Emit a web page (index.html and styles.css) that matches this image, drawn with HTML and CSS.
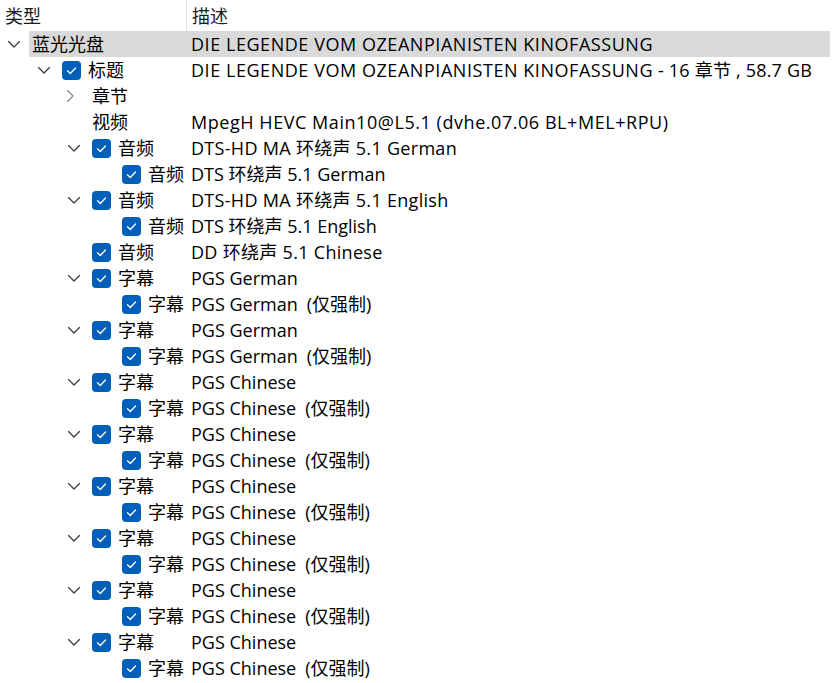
FILE: index.html
```html
<!DOCTYPE html>
<html lang="zh-CN">
<head>
  <meta charset="UTF-8" />
  <title>蓝光光盘</title>
  <link rel="stylesheet" href="styles.css">
</head>
<body>
  <div class="tree">
    <div class="head">
      <div class="head-type">类型</div>
      <div class="head-desc">描述</div>
    </div>

    <div class="row selected">
      <span class="exp"><svg class="down" viewBox="0 0 12 7"><polyline points="0.5,0.5 6,6 11.5,0.5"/></svg></span>
      <div class="sel">
        <span class="sel-name">蓝光光盘</span>
        <span class="desc caps">DIE LEGENDE VOM OZEANPIANISTEN KINOFASSUNG</span>
      </div>
    </div>

    <div class="row">
      <div class="type l1"><span class="exp"><svg class="down" viewBox="0 0 12 7"><polyline points="0.5,0.5 6,6 11.5,0.5"/></svg></span><span class="chk"></span>标题</div>
      <div class="desc caps">DIE LEGENDE VOM OZEANPIANISTEN KINOFASSUNG<span class="plain"> - 16 章节 , 58.7 GB</span></div>
    </div>
    <div class="row">
      <div class="type l2"><span class="exp"><svg class="right" viewBox="0 0 7 12"><polyline points="0.5,0.5 6,6 0.5,11.5"/></svg></span>章节</div>
      <div class="desc"></div>
    </div>
    <div class="row">
      <div class="type l2"><span class="exp"></span>视频</div>
      <div class="desc caps">MpegH HEVC Main10@L5.1 (dvhe.07.06 BL+MEL+RPU)</div>
    </div>

    <div class="row">
      <div class="type l2"><span class="exp"><svg class="down" viewBox="0 0 12 7"><polyline points="0.5,0.5 6,6 11.5,0.5"/></svg></span><span class="chk"></span>音频</div>
      <div class="desc mixed">DTS-HD MA 环绕声 5.1 German</div>
    </div>
    <div class="row">
      <div class="type l3"><span class="exp"></span><span class="chk"></span>音频</div>
      <div class="desc">DTS 环绕声 5.1 German</div>
    </div>
    <div class="row">
      <div class="type l2"><span class="exp"><svg class="down" viewBox="0 0 12 7"><polyline points="0.5,0.5 6,6 11.5,0.5"/></svg></span><span class="chk"></span>音频</div>
      <div class="desc mixed">DTS-HD MA 环绕声 5.1 English</div>
    </div>
    <div class="row">
      <div class="type l3"><span class="exp"></span><span class="chk"></span>音频</div>
      <div class="desc">DTS 环绕声 5.1 English</div>
    </div>
    <div class="row">
      <div class="type l2"><span class="exp"></span><span class="chk"></span>音频</div>
      <div class="desc mixed">DD 环绕声 5.1 Chinese</div>
    </div>

    <div class="row">
      <div class="type l2"><span class="exp"><svg class="down" viewBox="0 0 12 7"><polyline points="0.5,0.5 6,6 11.5,0.5"/></svg></span><span class="chk"></span>字幕</div>
      <div class="desc">PGS German</div>
    </div>
    <div class="row">
      <div class="type l3"><span class="exp"></span><span class="chk"></span>字幕</div>
      <div class="desc">PGS German<span class="forced">(仅强制)</span></div>
    </div>
    <div class="row">
      <div class="type l2"><span class="exp"><svg class="down" viewBox="0 0 12 7"><polyline points="0.5,0.5 6,6 11.5,0.5"/></svg></span><span class="chk"></span>字幕</div>
      <div class="desc">PGS German</div>
    </div>
    <div class="row">
      <div class="type l3"><span class="exp"></span><span class="chk"></span>字幕</div>
      <div class="desc">PGS German<span class="forced">(仅强制)</span></div>
    </div>

    <div class="row">
      <div class="type l2"><span class="exp"><svg class="down" viewBox="0 0 12 7"><polyline points="0.5,0.5 6,6 11.5,0.5"/></svg></span><span class="chk"></span>字幕</div>
      <div class="desc">PGS Chinese</div>
    </div>
    <div class="row">
      <div class="type l3"><span class="exp"></span><span class="chk"></span>字幕</div>
      <div class="desc">PGS Chinese<span class="forced">(仅强制)</span></div>
    </div>
    <div class="row">
      <div class="type l2"><span class="exp"><svg class="down" viewBox="0 0 12 7"><polyline points="0.5,0.5 6,6 11.5,0.5"/></svg></span><span class="chk"></span>字幕</div>
      <div class="desc">PGS Chinese</div>
    </div>
    <div class="row">
      <div class="type l3"><span class="exp"></span><span class="chk"></span>字幕</div>
      <div class="desc">PGS Chinese<span class="forced">(仅强制)</span></div>
    </div>
    <div class="row">
      <div class="type l2"><span class="exp"><svg class="down" viewBox="0 0 12 7"><polyline points="0.5,0.5 6,6 11.5,0.5"/></svg></span><span class="chk"></span>字幕</div>
      <div class="desc">PGS Chinese</div>
    </div>
    <div class="row">
      <div class="type l3"><span class="exp"></span><span class="chk"></span>字幕</div>
      <div class="desc">PGS Chinese<span class="forced">(仅强制)</span></div>
    </div>
    <div class="row">
      <div class="type l2"><span class="exp"><svg class="down" viewBox="0 0 12 7"><polyline points="0.5,0.5 6,6 11.5,0.5"/></svg></span><span class="chk"></span>字幕</div>
      <div class="desc">PGS Chinese</div>
    </div>
    <div class="row">
      <div class="type l3"><span class="exp"></span><span class="chk"></span>字幕</div>
      <div class="desc">PGS Chinese<span class="forced">(仅强制)</span></div>
    </div>
    <div class="row">
      <div class="type l2"><span class="exp"><svg class="down" viewBox="0 0 12 7"><polyline points="0.5,0.5 6,6 11.5,0.5"/></svg></span><span class="chk"></span>字幕</div>
      <div class="desc">PGS Chinese</div>
    </div>
    <div class="row">
      <div class="type l3"><span class="exp"></span><span class="chk"></span>字幕</div>
      <div class="desc">PGS Chinese<span class="forced">(仅强制)</span></div>
    </div>
    <div class="row">
      <div class="type l2"><span class="exp"><svg class="down" viewBox="0 0 12 7"><polyline points="0.5,0.5 6,6 11.5,0.5"/></svg></span><span class="chk"></span>字幕</div>
      <div class="desc">PGS Chinese</div>
    </div>
    <div class="row">
      <div class="type l3"><span class="exp"></span><span class="chk"></span>字幕</div>
      <div class="desc">PGS Chinese<span class="forced">(仅强制)</span></div>
    </div>
  </div>
</body>
</html>
```

FILE: styles.css
```css
body {
  margin: 0;
  padding: 0;
  background-color: #fff;
  color: #000;
  font-family: "Open Sans", "Noto Sans CJK SC", sans-serif;
  font-size: 18px;
  line-height: 22px;
}

.tree {
  width: 833px;
  overflow: hidden;
}

.head {
  display: flex;
  height: 31px;
  align-items: center;
  color: #1b1b1b;
}

.head-type {
  width: 181px;
  padding-left: 5px;
  align-self: stretch;
  display: flex;
  align-items: center;
  border-right: 1px solid #e5e5e5;
}

.head-desc {
  padding-left: 5px;
}

.row {
  display: flex;
  height: 26px;
  align-items: center;
  white-space: nowrap;
}

.type {
  display: flex;
  align-items: center;
  width: 186px;
  flex: none;
  overflow: hidden;
  box-sizing: border-box;
}

.l1 { padding-left: 30px; }
.l2 { padding-left: 60px; }
.l3 { padding-left: 90px; }

.exp {
  width: 32px;
  flex: none;
  display: flex;
  align-items: center;
}

.exp svg {
  fill: none;
  stroke-width: 1.3;
  stroke-linecap: round;
  stroke-linejoin: round;
}

.exp .down {
  width: 12px;
  height: 7px;
  margin-left: 8px;
  stroke: #3b3b3b;
}

.exp .right {
  width: 7px;
  height: 12px;
  margin-left: 7px;
  stroke: #8a8a8a;
}

.chk {
  width: 19px;
  height: 19px;
  flex: none;
  margin-right: 7px;
  border-radius: 4px;
  background-color: #005fb8;
  background-image: url("data:image/svg+xml,%3Csvg xmlns='http://www.w3.org/2000/svg' viewBox='0 0 19 19'%3E%3Cpolyline points='5.5,9.8 8.3,12.5 13.5,7' fill='none' stroke='white' stroke-width='1.3' stroke-linecap='round' stroke-linejoin='round'/%3E%3C/svg%3E");
}

.desc {
  padding-left: 5px;
}

.caps {
  letter-spacing: 0.55px;
}

.caps .plain {
  letter-spacing: 0.2px;
}

.mixed {
  letter-spacing: 0.3px;
}

.forced {
  margin-left: 9px;
}

.selected .exp {
  width: 29px;
}

.sel {
  display: flex;
  align-items: center;
  flex: 1;
  height: 26px;
  margin-right: 3px;
  padding-left: 3px;
  background-color: #d9d9d9;
}

.sel-name {
  width: 154px;
  flex: none;
}
```
